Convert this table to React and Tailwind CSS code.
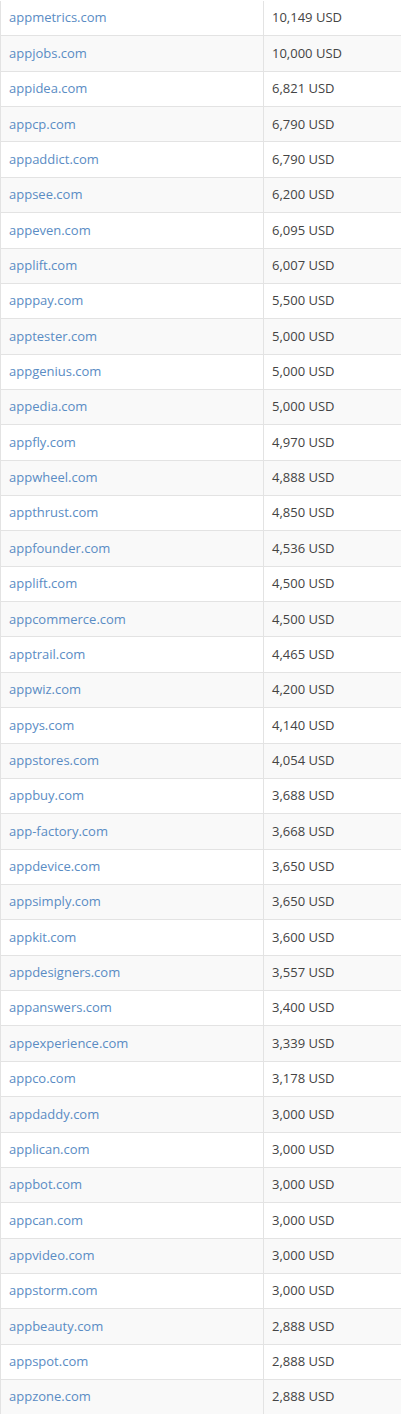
const rows = [
  ["appmetrics.com", "10,149 USD"],
  ["appjobs.com", "10,000 USD"],
  ["appidea.com", "6,821 USD"],
  ["appcp.com", "6,790 USD"],
  ["appaddict.com", "6,790 USD"],
  ["appsee.com", "6,200 USD"],
  ["appeven.com", "6,095 USD"],
  ["applift.com", "6,007 USD"],
  ["apppay.com", "5,500 USD"],
  ["apptester.com", "5,000 USD"],
  ["appgenius.com", "5,000 USD"],
  ["appedia.com", "5,000 USD"],
  ["appfly.com", "4,970 USD"],
  ["appwheel.com", "4,888 USD"],
  ["appthrust.com", "4,850 USD"],
  ["appfounder.com", "4,536 USD"],
  ["applift.com", "4,500 USD"],
  ["appcommerce.com", "4,500 USD"],
  ["apptrail.com", "4,465 USD"],
  ["appwiz.com", "4,200 USD"],
  ["appys.com", "4,140 USD"],
  ["appstores.com", "4,054 USD"],
  ["appbuy.com", "3,688 USD"],
  ["app-factory.com", "3,668 USD"],
  ["appdevice.com", "3,650 USD"],
  ["appsimply.com", "3,650 USD"],
  ["appkit.com", "3,600 USD"],
  ["appdesigners.com", "3,557 USD"],
  ["appanswers.com", "3,400 USD"],
  ["appexperience.com", "3,339 USD"],
  ["appco.com", "3,178 USD"],
  ["appdaddy.com", "3,000 USD"],
  ["applican.com", "3,000 USD"],
  ["appbot.com", "3,000 USD"],
  ["appcan.com", "3,000 USD"],
  ["appvideo.com", "3,000 USD"],
  ["appstorm.com", "3,000 USD"],
  ["appbeauty.com", "2,888 USD"],
  ["appspot.com", "2,888 USD"],
  ["appzone.com", "2,888 USD"],
];

export default function App() {
  return (
    <div className="w-[401px] bg-white pt-px font-['Open_Sans',sans-serif] text-[13px]">
      {rows.map(([domain, price], i) => (
        <div
          key={i}
          className={`grid grid-cols-[263px_1fr] h-[35.36px] border-l border-b border-[#e3e3e3] ${
            i % 2 === 1 ? "bg-[#f9f9f9]" : "bg-white"
          }`}
        >
          <div className="flex items-center pl-2 border-r border-[#e3e3e3]">
            <a href="#" className="text-[#5a8cc4]">
              {domain}
            </a>
          </div>
          <div className="flex items-center pl-2 text-[#444]">{price}</div>
        </div>
      ))}
    </div>
  );
}
